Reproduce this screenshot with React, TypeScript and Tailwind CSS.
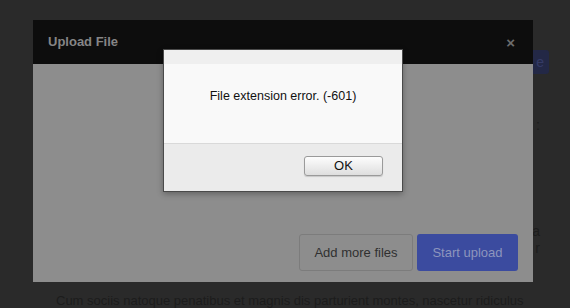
import React from "react";

export default function App() {
  return (
    <div className="relative w-[570px] h-[308px] overflow-hidden bg-[#2a2a2a] font-['Liberation_Sans',Arial,sans-serif]">
      {/* background page (dimmed) */}
      <div className="flex flex-col h-full">
        <div className="flex justify-end pt-[50px] pr-[21px]">
          <div className="w-[40px] h-[24px] rounded-[3px] bg-[#232846] text-[#353b66] text-[14px] leading-[24px] text-right pr-[5px]">
            e
          </div>
        </div>
        <div className="flex flex-col items-end pr-[30px] text-[#1c1c1c] text-[14px] leading-[17px]">
          <div className="mt-[43px]">:</div>
          <div className="mt-[89px]">a</div>
          <div>r</div>
        </div>
        <div className="mt-auto pl-[56px] text-[13px] leading-[14px] h-[14px] text-[#1c1c1c] whitespace-nowrap">
          Cum sociis natoque penatibus et magnis dis parturient montes, nascetur ridiculus
        </div>
      </div>

      {/* upload modal */}
      <div className="absolute left-[33px] top-[20px] w-[500px] h-[262px] flex flex-col">
        <div className="h-[44px] bg-[#0d0d0d] flex items-center justify-between pl-[15px] pr-[18px]">
          <span className="text-[13px] font-bold text-[#858585]">Upload File</span>
          <span className="text-[15px] font-bold text-[#6c6c6c] leading-none">×</span>
        </div>
        <div className="flex-1 bg-[#8d8d8d] flex items-end justify-end gap-[4px] pr-[15px] pb-[11px]">
          <div className="w-[114px] h-[37px] rounded-[3px] border border-[#7c7c7c] flex items-center justify-center text-[13px] text-[#303030]">
            Add more files
          </div>
          <div className="w-[101px] h-[37px] rounded-[3px] bg-[#3b4b9f] flex items-center justify-center text-[13px] text-[#8d95bd]">
            Start upload
          </div>
        </div>
      </div>

      {/* alert dialog */}
      <div className="absolute left-[163px] top-[49px] w-[240px] h-[143px] border border-[#4a4a4a] flex flex-col shadow-[0_2px_6px_rgba(0,0,0,0.3)]">
        <div className="h-[14px] bg-[#efefef]" />
        <div className="h-[79px] bg-[#f9f9f9] pt-[24px] text-center text-[12.5px] leading-[16px] text-[#111111]">
          File extension error. (-601)
        </div>
        <div className="flex-1 bg-[#ebebeb] border-t border-[#d9d9d9] flex justify-end items-start pt-[12px] pr-[19px]">
          <div className="w-[79px] h-[20px] rounded-[3px] border border-[#9a9a9a] bg-gradient-to-b from-[#fdfdfd] to-[#dedede] shadow-[0_1px_1px_rgba(0,0,0,0.15)] flex items-center justify-center text-[13px] text-[#111111]">
            OK
          </div>
        </div>
      </div>
    </div>
  );
}
